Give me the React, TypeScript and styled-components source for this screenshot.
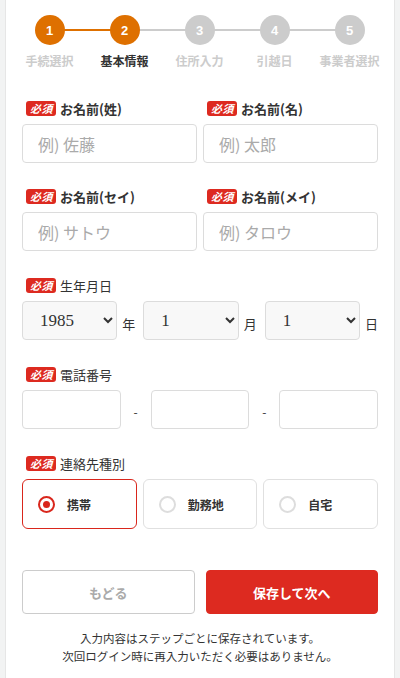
import * as React from 'react';
import styled, { createGlobalStyle } from 'styled-components';

const GlobalStyle = createGlobalStyle`
  body {
    margin: 0;
    background: #f2f3f3;
    font-family: "Noto Sans CJK JP", "Noto Sans", sans-serif;
    color: #333;
  }
`;

const Panel = styled.div`
  margin: 0 5px;
  min-height: 678px;
  background: #fff;
  border-left: 1px solid #e6e6e6;
  border-right: 1px solid #e6e6e6;
  box-sizing: border-box;
`;

const Stepper = styled.ol`
  list-style: none;
  margin: 0;
  padding: 15px 0 0 6px;
  display: grid;
  grid-template-columns: repeat(5, 75px);
`;

const Step = styled.li<{ $lineOn: boolean; $last: boolean }>`
  position: relative;
  display: flex;
  flex-direction: column;
  align-items: center;

  &::after {
    content: '';
    display: ${(p) => (p.$last ? 'none' : 'block')};
    position: absolute;
    top: 14px;
    left: 37px;
    width: 75px;
    height: 2px;
    background: ${(p) => (p.$lineOn ? '#de7000' : '#cccccc')};
  }
`;

const Circle = styled.span<{ $on: boolean }>`
  position: relative;
  z-index: 1;
  width: 30px;
  height: 30px;
  border-radius: 50%;
  background: ${(p) => (p.$on ? '#de7000' : '#cccccc')};
  color: #fff;
  font: bold 13px "Liberation Sans", sans-serif;
  display: flex;
  align-items: center;
  justify-content: center;
`;

const StepLabel = styled.span<{ $current: boolean }>`
  margin-top: 8px;
  font-size: 12px;
  font-weight: bold;
  line-height: 16px;
  white-space: nowrap;
  color: ${(p) => (p.$current ? '#333' : '#cccccc')};
`;

const Form = styled.div`
  padding: 31px 16px 0;
`;

const Row = styled.div`
  display: grid;
  grid-template-columns: 1fr 1fr;
  gap: 6px;
`;

const Field = styled.div<{ $space?: number }>`
  margin-bottom: ${(p) => p.$space ?? 25}px;
`;

const LabelRow = styled.div<{ $bold?: boolean }>`
  display: flex;
  align-items: center;
  gap: 4px;
  height: 16px;
  margin-bottom: 8px;
  margin-left: 4px;
  font-size: 13px;
  font-weight: ${(p) => (p.$bold ? 'bold' : 'normal')};
`;

const Badge = styled.span`
  background: #dd2a20;
  color: #fff;
  font-size: 11px;
  font-weight: bold;
  font-style: italic;
  letter-spacing: 0.5px;
  line-height: 15px;
  height: 15px;
  padding: 0 3px 0 4px;
  border-radius: 3px;
`;

const TextInput = styled.input`
  box-sizing: border-box;
  width: 100%;
  height: 39px;
  border: 1px solid #dcdcdc;
  border-radius: 4px;
  padding: 0 15px;
  font-size: 16px;
  font-family: inherit;
  color: #333;
  background: #fff;
  &::placeholder {
    color: #aaa;
  }
`;

const DateRow = styled.div`
  display: flex;
  align-items: center;
`;

const Select = styled.select`
  box-sizing: border-box;
  flex: 1;
  min-width: 0;
  height: 39px;
  border: 1px solid #dcdcdc;
  border-radius: 4px;
  background: #f8f8f8;
  padding: 0 10px 0 13px;
  font-size: 17px;
  font-family: "Liberation Serif", serif;
  color: #333;
`;

const Unit = styled.span<{ $last?: boolean }>`
  font-size: 13px;
  margin: 6px ${(p) => (p.$last ? '0' : '8px')} 0 5px;
`;

const PhoneRow = styled.div`
  display: grid;
  grid-template-columns: 1fr 30px 1fr 30px 1fr;
  align-items: center;
`;

const Dash = styled.span`
  text-align: center;
  font-size: 12px;
  margin-top: 4px;
`;

const RadioRow = styled.div`
  display: grid;
  grid-template-columns: repeat(3, 1fr);
  gap: 6px;
  margin-bottom: 41px;
`;

const RadioCard = styled.label<{ $checked: boolean }>`
  box-sizing: border-box;
  height: 50px;
  display: flex;
  align-items: center;
  gap: 12px;
  padding-left: 15px;
  border: ${(p) => (p.$checked ? '1.5px solid #d9261c' : '1px solid #e0e0e0')};
  border-radius: 6px;
  font-size: 12px;
  font-weight: bold;
`;

const RadioDot = styled.span<{ $checked: boolean }>`
  box-sizing: border-box;
  width: 17px;
  height: 17px;
  border-radius: 50%;
  border: 2px solid ${(p) => (p.$checked ? '#d9261c' : '#dddddd')};
  display: flex;
  align-items: center;
  justify-content: center;
  &::after {
    content: '';
    display: ${(p) => (p.$checked ? 'block' : 'none')};
    width: 7px;
    height: 7px;
    border-radius: 50%;
    background: #d9261c;
  }
`;

const Buttons = styled.div`
  display: grid;
  grid-template-columns: 1fr 1fr;
  gap: 11px;
`;

const Button = styled.button<{ $primary?: boolean }>`
  height: 44px;
  border-radius: 4px;
  font-family: inherit;
  font-size: 13px;
  font-weight: bold;
  border: 1px solid ${(p) => (p.$primary ? '#dd2a20' : '#cccccc')};
  background: ${(p) => (p.$primary ? '#dd2a20' : '#fff')};
  color: ${(p) => (p.$primary ? '#fff' : '#aaaaaa')};
`;

const Note = styled.p`
  margin: 15px 0 0;
  text-align: center;
  font-size: 11.5px;
  line-height: 18px;
  color: #333;
`;

const steps = ['手続選択', '基本情報', '住所入力', '引越日', '事業者選択'];
const current = 1;

export default function App() {
  const [contact, setContact] = React.useState('携帯');

  return (
    <>
      <GlobalStyle />
      <Panel>
        <Stepper>
          {steps.map((s, i) => (
            <Step key={s} $lineOn={i < current} $last={i === steps.length - 1}>
              <Circle $on={i <= current}>{i + 1}</Circle>
              <StepLabel $current={i === current}>{s}</StepLabel>
            </Step>
          ))}
        </Stepper>

        <Form>
          <Row>
            <Field>
              <LabelRow $bold><Badge>必須</Badge>お名前(姓)</LabelRow>
              <TextInput placeholder="例) 佐藤" />
            </Field>
            <Field>
              <LabelRow $bold><Badge>必須</Badge>お名前(名)</LabelRow>
              <TextInput placeholder="例) 太郎" />
            </Field>
          </Row>
          <Row>
            <Field $space={26}>
              <LabelRow $bold><Badge>必須</Badge>お名前(セイ)</LabelRow>
              <TextInput placeholder="例) サトウ" />
            </Field>
            <Field $space={26}>
              <LabelRow $bold><Badge>必須</Badge>お名前(メイ)</LabelRow>
              <TextInput placeholder="例) タロウ" />
            </Field>
          </Row>

          <Field $space={26}>
            <LabelRow><Badge>必須</Badge>生年月日</LabelRow>
            <DateRow>
              <Select defaultValue="1985">
                <option>1984</option>
                <option>1985</option>
                <option>1986</option>
              </Select>
              <Unit>年</Unit>
              <Select defaultValue="1">
                <option>1</option>
                <option>2</option>
              </Select>
              <Unit>月</Unit>
              <Select defaultValue="1">
                <option>1</option>
                <option>2</option>
              </Select>
              <Unit $last>日</Unit>
            </DateRow>
          </Field>

          <Field $space={26}>
            <LabelRow><Badge>必須</Badge>電話番号</LabelRow>
            <PhoneRow>
              <TextInput />
              <Dash>-</Dash>
              <TextInput />
              <Dash>-</Dash>
              <TextInput />
            </PhoneRow>
          </Field>

          <LabelRow><Badge>必須</Badge>連絡先種別</LabelRow>
          <RadioRow>
            {['携帯', '勤務地', '自宅'].map((c) => (
              <RadioCard key={c} $checked={contact === c} onClick={() => setContact(c)}>
                <RadioDot $checked={contact === c} />
                {c}
              </RadioCard>
            ))}
          </RadioRow>

          <Buttons>
            <Button>もどる</Button>
            <Button $primary>保存して次へ</Button>
          </Buttons>

          <Note>
            入力内容はステップごとに保存されています。
            <br />
            次回ログイン時に再入力いただく必要はありません。
          </Note>
        </Form>
      </Panel>
    </>
  );
}
